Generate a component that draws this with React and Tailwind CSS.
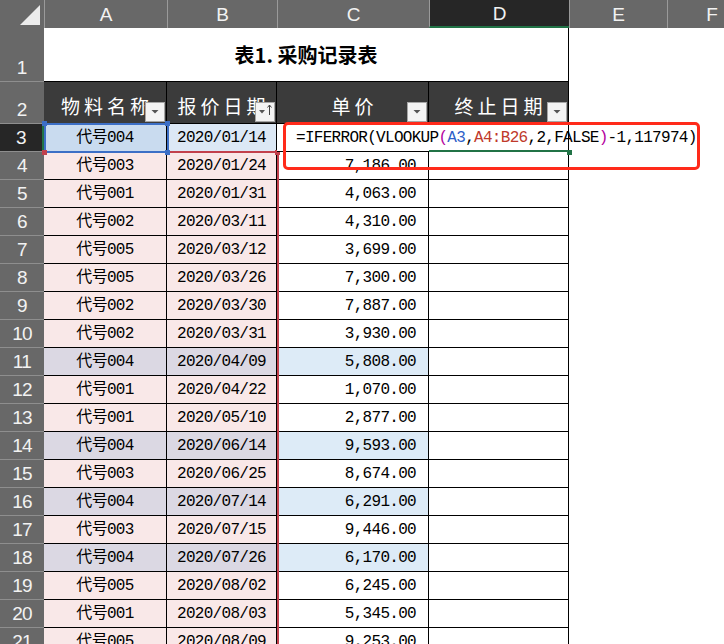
import React from "react";

// 列宽：行号、A、B、C、D、E、F
const COLS = "grid grid-cols-[44px_123px_110px_152px_140px_98px_57px]";
const CELL_FONT = { fontFamily: '"Liberation Mono", "Noto Sans CJK SC", monospace' };

const rows = [
  [4, "003", "2020/01/24", "7,186.00"],
  [5, "001", "2020/01/31", "4,063.00"],
  [6, "002", "2020/03/11", "4,310.00"],
  [7, "005", "2020/03/12", "3,699.00"],
  [8, "005", "2020/03/26", "7,300.00"],
  [9, "002", "2020/03/30", "7,887.00"],
  [10, "002", "2020/03/31", "3,930.00"],
  [11, "004", "2020/04/09", "5,808.00"],
  [12, "001", "2020/04/22", "1,070.00"],
  [13, "001", "2020/05/10", "2,877.00"],
  [14, "004", "2020/06/14", "9,593.00"],
  [15, "003", "2020/06/25", "8,674.00"],
  [16, "004", "2020/07/14", "6,291.00"],
  [17, "003", "2020/07/15", "9,446.00"],
  [18, "004", "2020/07/26", "6,170.00"],
  [19, "005", "2020/08/02", "6,245.00"],
  [20, "001", "2020/08/03", "5,345.00"],
  [21, "005", "2020/08/09", "9,253.00"],
];

function FilterButton({ sorted }) {
  return (
    <div className="absolute bottom-[1px] right-[1px] flex h-[20px] w-[20px] items-end justify-center border border-[#a6a6a6] bg-[#f4f4f4] pb-[3px]">
      <svg width="18" height="14" viewBox="0 0 18 14">
        <path d={sorted ? "M3 6h6l-3 3.5z" : "M5.5 6h7l-3.5 3.5z"} fill="#555" />
        {sorted && <path d="M13.5 1v10M11.5 3.5l2-2.5 2 2.5" stroke="#444" strokeWidth="1" fill="none" />}
      </svg>
    </div>
  );
}

function RowHead({ n, active, align = "center" }) {
  return (
    <div
      className={`flex justify-center border-b border-[#8e8e8e] text-[19px] leading-none ${
        active ? "bg-[#262626] border-r-2 border-r-[#217346]" : "bg-[#686868]"
      } ${align === "end" ? "items-end pb-[4px]" : "items-center"} text-[#f2f2f2]`}
      style={{ fontFamily: '"Liberation Sans", sans-serif' }}
    >
      {n}
    </div>
  );
}

function HeaderCell({ label, sorted }) {
  return (
    <div className="relative flex items-end justify-center border-r border-b border-black bg-[#3b3b3b] pb-[8px] pl-[4px] text-[19px] leading-none tracking-[4px] text-white"
      style={{ fontFamily: '"Noto Sans CJK SC", sans-serif' }}>
      {label}
      <FilterButton sorted={sorted} />
    </div>
  );
}

function DataRow({ n, code, date, price }) {
  const hl = code === "004";
  return (
    <div className={`${COLS} h-[28px] grid-rows-[28px]`}>
      <RowHead n={n} />
      <div className={`flex items-center justify-center border-r border-b border-black ${hl ? "bg-[#dbd8e3]" : "bg-[#f9e8e8]"}`}>
        代号{code}
      </div>
      <div className={`flex items-center justify-center border-r border-b border-black ${hl ? "bg-[#dbd8e3]" : "bg-[#f9e8e8]"}`}>
        {date}
      </div>
      <div className={`flex items-center justify-end border-r border-b border-black pr-[12px] ${hl ? "bg-[#ddebf7]" : "bg-white"}`}>
        {price}
      </div>
      <div className="border-r border-b border-black bg-white" />
      <div className="bg-white" />
      <div className="bg-white" />
    </div>
  );
}

export default function App() {
  return (
    <div className="relative h-[644px] w-[724px] overflow-hidden bg-white text-[16px] leading-none tracking-[-0.7px] text-black" style={CELL_FONT}>
      {/* 列标 */}
      <div className={`${COLS} h-[28px] grid-rows-[28px] border-b border-[#9c9c9c] text-[19px] text-[#f2f2f2]`} style={{ fontFamily: '"Liberation Sans", sans-serif', letterSpacing: 0 }}>
        <div className="relative bg-[#686868]">
          <svg className="absolute left-[20px] top-[5px]" width="21" height="21" viewBox="0 0 21 21">
            <path d="M20 0V20H0z" fill="#ececec" />
          </svg>
        </div>
        {["A", "B", "C"].map((c) => (
          <div key={c} className="flex items-center justify-center border-l border-[#9a9a9a] bg-[#686868]">{c}</div>
        ))}
        <div className="flex items-center justify-center border-b-2 border-l border-[#9a9a9a] border-b-[#217346] bg-[#262626]">D</div>
        <div className="flex items-center justify-center border-l border-[#9a9a9a] bg-[#686868]">E</div>
        <div className="flex items-center justify-center border-l border-[#9a9a9a] bg-[#686868] pl-[32px]">F</div>
      </div>

      {/* 第1行 标题 */}
      <div className={`${COLS} h-[54px] grid-rows-[54px]`} style={{ letterSpacing: 0 }}>
        <RowHead n={1} align="end" />
        <div className="col-span-4 flex items-center justify-center border-r border-b border-black text-[20px] font-bold"
          style={{ fontFamily: '"Noto Sans CJK SC", sans-serif' }}>
          表1. 采购记录表
        </div>
        <div />
        <div />
      </div>

      {/* 第2行 表头 */}
      <div className={`${COLS} h-[42px] grid-rows-[42px]`} style={{ letterSpacing: 0 }}>
        <RowHead n={2} align="end" />
        <HeaderCell label="物料名称" />
        <HeaderCell label="报价日期" sorted />
        <HeaderCell label="单价" />
        <HeaderCell label="终止日期" />
        <div />
        <div />
      </div>

      {/* 第3行 编辑中的公式 */}
      <div className={`${COLS} h-[28px] grid-rows-[28px]`}>
        <RowHead n={3} active />
        <div className="flex items-center justify-center border-r border-b border-black bg-[#c9dbef]">代号004</div>
        <div className="flex items-center justify-center border-r border-b border-black bg-[#dce8f5]">2020/01/14</div>
        <div className="relative z-10 flex items-center overflow-visible whitespace-nowrap border-b border-black bg-white pl-[19px]">
          <span>
            =IFERROR(VLOOKUP<span className="text-[#b4009e]">(</span>
            <span className="text-[#2f5fc9]">A3</span>,<span className="text-[#c0392b]">A4:B26</span>,2,FALSE
            <span className="text-[#b4009e]">)</span>-1,117974)
          </span>
        </div>
        <div className="border-r border-b-2 border-black border-b-[#217346] bg-white" />
        <div className="bg-white" />
        <div className="bg-white" />
      </div>

      {rows.map(([n, code, date, price]) => (
        <DataRow key={n} n={n} code={code} date={date} price={price} />
      ))}

      {/* 引用区域 A4:B26（红）与 A3（蓝） */}
      <div className="pointer-events-none absolute left-[44px] top-[151px] h-[520px] w-[235px] border-t-2 border-r-2 border-[#c2404c]" />
      <div className="pointer-events-none absolute left-[44px] top-[123px] h-[30px] w-[125px] border-2 border-[#3c6fc6]" />
      <div className="absolute left-[42px] top-[121px] h-[5px] w-[5px] bg-[#3c6fc6]" />
      <div className="absolute left-[165px] top-[121px] h-[5px] w-[5px] bg-[#3c6fc6]" />
      <div className="absolute left-[165px] top-[150px] h-[5px] w-[5px] bg-[#3c6fc6]" />
      <div className="absolute left-[42px] top-[150px] h-[5px] w-[5px] bg-[#c2404c]" />
      <div className="absolute left-[275px] top-[150px] h-[5px] w-[5px] bg-[#c2404c]" />
      <div className="absolute left-[567px] top-[150px] h-[5px] w-[5px] bg-[#217346]" />

      {/* 红色标注框 */}
      <div className="pointer-events-none absolute left-[283px] top-[122px] z-20 h-[48px] w-[417px] rounded-[5px] border-[3px] border-[#ff2a1a]" />
    </div>
  );
}
